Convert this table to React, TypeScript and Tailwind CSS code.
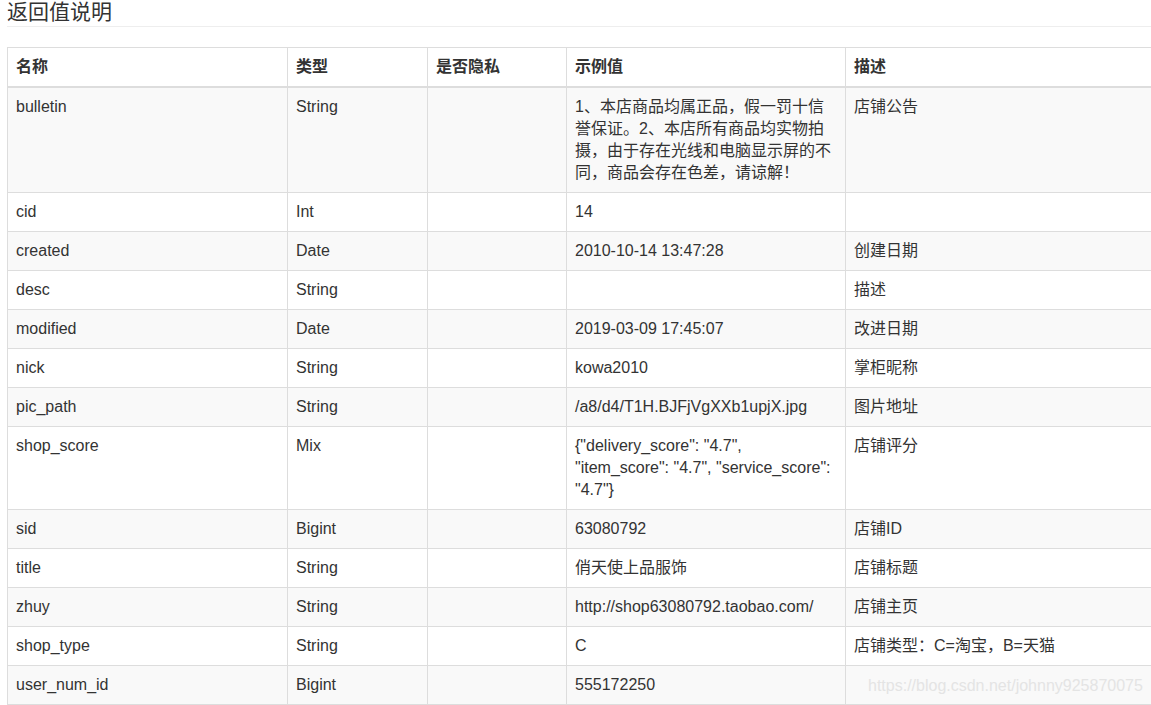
const rows: [string, string, string, string, string][] = [
  [
    "bulletin",
    "String",
    "",
    "1、本店商品均属正品，假一罚十信誉保证。2、本店所有商品均实物拍摄，由于存在光线和电脑显示屏的不同，商品会存在色差，请谅解！",
    "店铺公告",
  ],
  ["cid", "Int", "", "14", ""],
  ["created", "Date", "", "2010-10-14 13:47:28", "创建日期"],
  ["desc", "String", "", "", "描述"],
  ["modified", "Date", "", "2019-03-09 17:45:07", "改进日期"],
  ["nick", "String", "", "kowa2010", "掌柜昵称"],
  ["pic_path", "String", "", "/a8/d4/T1H.BJFjVgXXb1upjX.jpg", "图片地址"],
  [
    "shop_score",
    "Mix",
    "",
    '{"delivery_score": "4.7", "item_score": "4.7", "service_score": "4.7"}',
    "店铺评分",
  ],
  ["sid", "Bigint", "", "63080792", "店铺ID"],
  ["title", "String", "", "俏天使上品服饰", "店铺标题"],
  ["zhuy", "String", "", "http://shop63080792.taobao.com/", "店铺主页"],
  ["shop_type", "String", "", "C", "店铺类型：C=淘宝，B=天猫"],
  ["user_num_id", "Bigint", "", "555172250", ""],
]

const headers = ["名称", "类型", "是否隐私", "示例值", "描述"]

export default function App() {
  return (
    <div
      className="relative w-[1151px] h-[705px] overflow-hidden bg-white pl-[7px] text-[#333] text-[16px] leading-[22px]"
      style={{ fontFamily: '"Liberation Sans", Arial, "Noto Sans CJK SC", sans-serif' }}
    >
      <h2 className="text-[21px] leading-[24px] font-normal pb-[2px] border-b border-[#eee]">返回值说明</h2>

      <table className="mt-[20px] w-[1158px] table-fixed border-collapse border border-[#ddd]">
        <colgroup>
          <col className="w-[280px]" />
          <col className="w-[140px]" />
          <col className="w-[139px]" />
          <col className="w-[279px]" />
          <col className="w-[320px]" />
        </colgroup>
        <thead>
          <tr>
            {headers.map((h) => (
              <th
                key={h}
                className="border border-[#ddd] border-b-2 px-[8px] py-[8px] text-left align-bottom font-bold"
              >
                {h}
              </th>
            ))}
          </tr>
        </thead>
        <tbody>
          {rows.map((r, i) => (
            <tr key={r[0]} className={i % 2 === 0 ? "bg-[#f9f9f9]" : "bg-white"}>
              {r.map((c, j) => (
                <td key={j} className="border border-[#ddd] px-[8px] py-[8px] align-top break-words">
                  {c}
                </td>
              ))}
            </tr>
          ))}
        </tbody>
      </table>

      <div className="absolute left-[868px] top-[675px] text-[16px] leading-[22px] text-[#e4e4e4]">
        https://blog.csdn.net/johnny925870075
      </div>
    </div>
  )
}
